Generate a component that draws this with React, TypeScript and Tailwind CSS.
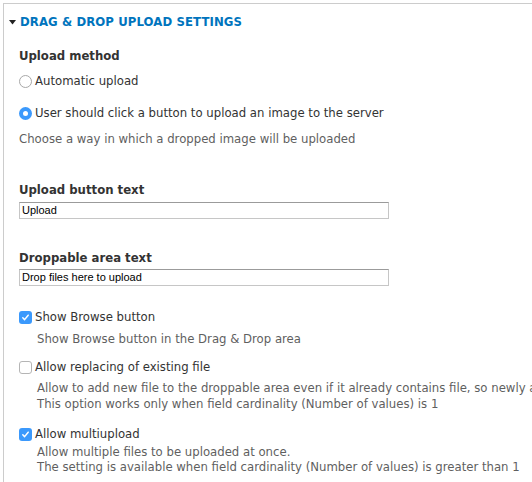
import React from "react";

function Radio({ checked }: { checked?: boolean }) {
  return checked ? (
    <span className="w-[13px] h-[13px] rounded-full bg-[#3b99fc] flex items-center justify-center shrink-0">
      <span className="w-[5px] h-[5px] rounded-full bg-white" />
    </span>
  ) : (
    <span className="w-[13px] h-[13px] rounded-full border border-[#a8a8a8] bg-white shrink-0" />
  );
}

function Check({ checked }: { checked?: boolean }) {
  return checked ? (
    <span className="w-[13px] h-[13px] rounded-[3px] bg-[#3b99fc] flex items-center justify-center shrink-0">
      <svg width="9" height="9" viewBox="0 0 9 9">
        <path d="M1.8 4.8 L3.6 6.6 L7.2 2.2" fill="none" stroke="white" strokeWidth="1.5" strokeLinecap="round" strokeLinejoin="round" />
      </svg>
    </span>
  ) : (
    <span className="w-[13px] h-[13px] rounded-[3px] border border-[#b5b5b5] bg-white shrink-0" />
  );
}

const options = [
  {
    label: "Show Browse button",
    checked: true,
    gap: "mt-[23px]",
    descGap: "mt-[6px] leading-[16px]",
    desc: ["Show Browse button in the Drag & Drop area"],
  },
  {
    label: "Allow replacing of existing file",
    checked: false,
    gap: "mt-[12px]",
    descGap: "mt-[5px] leading-[16px]",
    desc: [
      "Allow to add new file to the droppable area even if it already contains file, so newly added file will replace existing one.",
      "This option works only when field cardinality (Number of values) is 1",
    ],
  },
  {
    label: "Allow multiupload",
    checked: true,
    gap: "mt-[14px]",
    descGap: "mt-[2px] leading-[15px]",
    desc: [
      "Allow multiple files to be uploaded at once.",
      "The setting is available when field cardinality (Number of values) is greater than 1",
    ],
  },
];

export default function App() {
  return (
    <div className="w-[532px] h-[482px] overflow-hidden bg-white font-['DejaVu_Sans_Condensed','DejaVu_Sans',sans-serif] text-[#333]">
      <div className="ml-[3px] mt-[3px] w-[560px] h-[520px] border-t border-l border-[#ccc]">
        {/* Legend */}
        <div className="flex items-center pl-[5px] pt-[11px] h-[25px]">
          <svg width="7" height="5" viewBox="0 0 7 5" className="mr-[4px] mt-[1px]">
            <path d="M0 0 L7 0 L3.5 4.5 Z" fill="#222" />
          </svg>
          <span className="text-[#0074bd] font-bold text-[13px] tracking-[0.1px] whitespace-nowrap">
            DRAG &amp; DROP UPLOAD SETTINGS
          </span>
        </div>

        <div className="pl-[15px] whitespace-nowrap">
          {/* Upload method */}
          <div className="mt-[19px] font-bold text-[13px] leading-[16px]">Upload method</div>
          <div className="mt-[9px] flex items-center gap-[3px] text-[13px] leading-[16px]">
            <Radio />
            <span>Automatic upload</span>
          </div>
          <div className="mt-[16px] flex items-center gap-[3px] text-[13px] leading-[16px]">
            <Radio checked />
            <span>User should click a button to upload an image to the server</span>
          </div>
          <div className="mt-[10px] text-[13px] leading-[16px] text-[#5f5f5f]">
            Choose a way in which a dropped image will be uploaded
          </div>

          {/* Upload button text */}
          <div className="mt-[35px] font-bold text-[13px] leading-[16px]">Upload button text</div>
          <div className="mt-[4px] w-[370px] h-[17px] border border-[#c6c6c6] border-t-[#9b9b9b] flex items-center pl-[2px] font-['Liberation_Sans',sans-serif] text-[11px] text-black">
            Upload
          </div>

          {/* Droppable area text */}
          <div className="mt-[31px] font-bold text-[13px] leading-[16px]">Droppable area text</div>
          <div className="mt-[3px] w-[370px] h-[17px] border border-[#c6c6c6] border-t-[#9b9b9b] flex items-center pl-[2px] font-['Liberation_Sans',sans-serif] text-[11px] text-black">
            Drop files here to upload
          </div>

          {/* Checkboxes */}
          {options.map((o) => (
            <div key={o.label} className={o.gap}>
              <div className="flex items-center gap-[3px] text-[13px] leading-[16px]">
                <Check checked={o.checked} />
                <span>{o.label}</span>
              </div>
              <div className={`${o.descGap} pl-[18px] text-[13px] text-[#5f5f5f]`}>
                {o.desc.map((d) => (
                  <div key={d}>{d}</div>
                ))}
              </div>
            </div>
          ))}
        </div>
      </div>
    </div>
  );
}
